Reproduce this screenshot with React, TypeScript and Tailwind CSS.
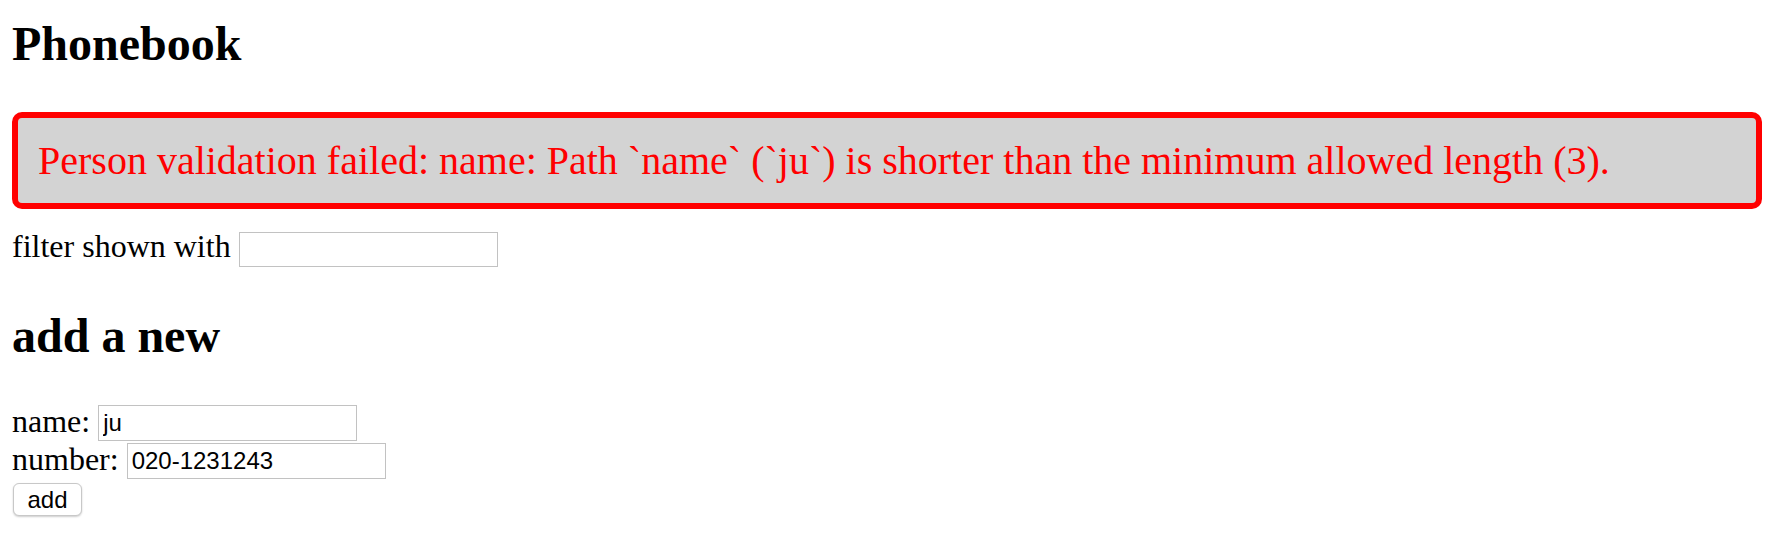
import { useState } from "react";

const serif = "font-['Liberation_Serif','Times_New_Roman',serif]";
const sans = "font-['Liberation_Sans',Arial,sans-serif]";

function Field({
  label,
  value,
  onChange,
}: {
  label: string;
  value: string;
  onChange: (v: string) => void;
}) {
  return (
    <div className="flex h-[38px] items-start">
      <span className="leading-[35px]">{label}</span>
      <input
        value={value}
        onChange={(e) => onChange(e.target.value)}
        className={`ml-[8px] mt-[1px] h-[36px] w-[259px] border border-[#c2c2c2] bg-white px-[4px] text-[24px] text-black outline-none ${sans}`}
      />
    </div>
  );
}

export default function App() {
  const [filter, setFilter] = useState("");
  const [name, setName] = useState("ju");
  const [number, setNumber] = useState("020-1231243");

  return (
    <div className={`min-h-[556px] bg-white pl-[12px] pr-[4px] pt-[16px] text-[32px] text-black ${serif}`}>
      <h2 className="text-[48px] font-bold leading-[56px]">Phonebook</h2>

      <div className="mt-[40px] mb-[20px] rounded-[10px] border-[6px] border-[#ff0000] bg-[#d3d3d3] px-[20px] py-[20px] text-[40px] leading-[45px] text-[#ff0000]">
        Person validation failed: name: Path `name` (`ju`) is shorter than the minimum allowed length (3).
      </div>

      <div className="flex items-start">
        <span className="leading-[35px]">filter shown with</span>
        <input
          value={filter}
          onChange={(e) => setFilter(e.target.value)}
          className={`ml-[8px] mt-[3px] h-[35px] w-[259px] border border-[#c2c2c2] bg-white px-[4px] text-[24px] outline-none ${sans}`}
        />
      </div>

      <h2 className="mt-[41px] text-[48px] font-bold leading-[56px]">add a new</h2>

      <form className="mt-[40px]" onSubmit={(e) => e.preventDefault()}>
        <Field label="name:" value={name} onChange={setName} />
        <Field label="number:" value={number} onChange={setNumber} />
        <button
          type="submit"
          className={`ml-[1px] mt-[3px] block h-[33px] w-[69px] rounded-[6px] border border-[#c8c8c8] bg-white text-[24px] leading-none text-black shadow-[0_1px_2px_rgba(0,0,0,0.2)] ${sans}`}
        >
          add
        </button>
      </form>
    </div>
  );
}
